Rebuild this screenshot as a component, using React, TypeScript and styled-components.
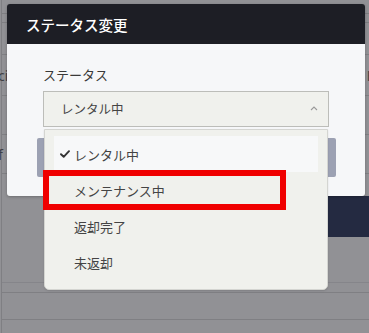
import React, { FC, ReactElement } from "react";
import styled, { createGlobalStyle } from "styled-components";

type Option = {
  label: string;
  selected?: boolean;
};

const OPTIONS: Option[] = [
  { label: "レンタル中", selected: true },
  { label: "メンテナンス中" },
  { label: "返却完了" },
  { label: "未返却" },
];

const GlobalStyle = createGlobalStyle`
  html, body {
    margin: 0;
    padding: 0;
    background: #919195;
  }
  body {
    font-family: "Noto Sans CJK JP", "Noto Sans", sans-serif;
  }
`;

const CheckIcon: FC = (): ReactElement => (
  <svg width="10" height="8" viewBox="0 0 10 8">
    <path
      d="M1 4.2 L3.7 6.8 L9 1.2"
      fill="none"
      stroke="#333"
      strokeWidth="1.9"
      strokeLinecap="round"
      strokeLinejoin="round"
    />
  </svg>
);

const ChevronUp: FC = (): ReactElement => (
  <svg width="8" height="5" viewBox="0 0 8 5">
    <path d="M1 4 L4 1 L7 4" fill="none" stroke="#9a9a9a" strokeWidth="1.1" />
  </svg>
);

const App: FC = (): ReactElement => {
  return (
    <StyledPage>
      <GlobalStyle />
      <StyledTable>
        <StyledRow $height={14} />
        <StyledRow $height={9} />
        <StyledRow $height={32} />
        <StyledRow $height={41}>
          <StyledCellText>ci</StyledCellText>
          <StyledCellText $right>H</StyledCellText>
        </StyledRow>
        <StyledRow $height={39} />
        <StyledRow $height={39}>
          <StyledCellText>f</StyledCellText>
        </StyledRow>
        <StyledActionRow $height={109}>
          <StyledNavyButton />
        </StyledActionRow>
        <StyledRow $height={10} />
        <StyledRow $height={27} />
      </StyledTable>

      <StyledModal>
        <StyledModalHeader>ステータス変更</StyledModalHeader>
        <StyledModalBody>
          <StyledLabel>ステータス</StyledLabel>
          <StyledSelectWrap>
            <StyledSelect>
              <span>レンタル中</span>
              <ChevronUp />
            </StyledSelect>
            <StyledMenu>
              {OPTIONS.map((option) => (
                <StyledMenuItem key={option.label} $selected={option.selected}>
                  <StyledCheck>{option.selected && <CheckIcon />}</StyledCheck>
                  {option.label}
                </StyledMenuItem>
              ))}
            </StyledMenu>
            <StyledHighlight />
          </StyledSelectWrap>
          <StyledSubmit />
        </StyledModalBody>
      </StyledModal>
    </StyledPage>
  );
};

export default App;

const StyledPage = styled.div`
  position: relative;
  width: 369px;
  height: 333px;
  overflow: hidden;
  background: #919195;
`;

const StyledTable = styled.div`
  display: flex;
  flex-direction: column;
  margin-left: 1px;
  border-left: 1px solid #7f7f83;
  height: 100%;
`;

const StyledRow = styled.div<{ $height: number }>`
  position: relative;
  height: ${(p) => p.$height - 1}px;
  border-bottom: 1px solid #7f7f83;
  display: flex;
  align-items: center;
  justify-content: space-between;
`;

const StyledActionRow = styled(StyledRow)`
  align-items: flex-start;
  justify-content: flex-end;
  border-bottom-color: #85858a;
`;

const StyledCellText = styled.span<{ $right?: boolean }>`
  font-family: "Noto Sans", sans-serif;
  font-size: 14px;
  color: #3f3f44;
  margin-left: ${(p) => (p.$right ? "0" : "-4px")};
  margin-right: ${(p) => (p.$right ? "-8px" : "0")};
`;

const StyledNavyButton = styled.div`
  margin-top: 22px;
  width: 180px;
  height: 41px;
  background: #242a41;
`;

const StyledModal = styled.div`
  position: absolute;
  top: 4px;
  left: 7px;
  width: 358px;
  border-radius: 3px;
  box-shadow: 0 1px 3px rgba(0, 0, 0, 0.25);
`;

const StyledModalHeader = styled.div`
  height: 40px;
  display: flex;
  align-items: center;
  padding-left: 19px;
  background: #1d1e25;
  border-radius: 3px 3px 0 0;
  color: #ffffff;
  font-size: 14.5px;
  font-weight: 500;
`;

const StyledModalBody = styled.div`
  display: flex;
  flex-direction: column;
  padding: 22px 36px 19px;
  background: #f6f7f9;
  border-radius: 0 0 3px 3px;
`;

const StyledLabel = styled.div`
  height: 18px;
  line-height: 18px;
  margin-bottom: 7px;
  font-size: 13px;
  color: #3a3a3a;
`;

const StyledSelectWrap = styled.div`
  position: relative;
`;

const StyledSelect = styled.div`
  box-sizing: border-box;
  height: 36px;
  display: flex;
  align-items: center;
  justify-content: space-between;
  padding: 0 10px 2px 17px;
  background: #f0f1ed;
  border: 1px solid #bcbdb9;
  font-size: 12.5px;
  color: #444;
`;

const StyledMenu = styled.div`
  position: absolute;
  z-index: 2;
  top: 38px;
  left: 1px;
  width: 284px;
  box-sizing: border-box;
  display: flex;
  flex-direction: column;
  padding: 6px 9px 9px;
  background: #f0f1ed;
  border: 1px solid #d4d5d1;
  border-radius: 0 0 5px 5px;
  box-shadow: 0 1px 2px rgba(0, 0, 0, 0.12);
`;

const StyledMenuItem = styled.div<{ $selected?: boolean }>`
  height: 36px;
  display: flex;
  align-items: center;
  padding-left: 6px;
  background: ${(p) => (p.$selected ? "#f7f8f9" : "transparent")};
  font-size: 13px;
  color: #444;
`;

const StyledCheck = styled.span`
  width: 14px;
  display: flex;
  align-items: center;
`;

const StyledHighlight = styled.div`
  position: absolute;
  z-index: 3;
  top: 79px;
  left: 0;
  width: 243px;
  height: 40px;
  box-sizing: border-box;
  border: 6px solid #f00000;
`;

const StyledSubmit = styled.div`
  height: 39px;
  margin: 11px -7px 0 -6px;
  background: #9ca1b3;
  border-radius: 2px;
`;
